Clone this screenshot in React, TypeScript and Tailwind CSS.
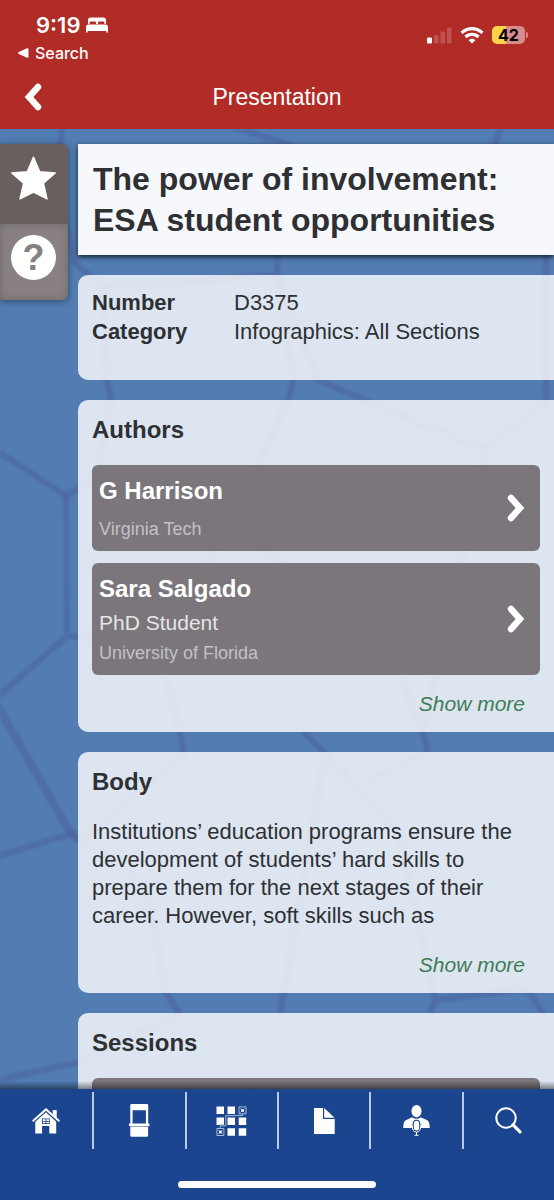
import React from "react";

function BedIcon() {
  return (
    <svg viewBox="0 0 22 16" className="h-4 w-[22px]" fill="currentColor" aria-hidden="true">
      <path d="M2 7V3.200C2 1.400 3 .5 4.700 .5h12.600C19 .5 20 1.400 20 3.200V7h-1.600V5.800c0-.9-.5-1.400-1.400-1.400h-3.600c-.9 0-1.400.5-1.400 1.400V7h-2V5.800c0-.9-.5-1.400-1.400-1.400H5c-.9 0-1.400.5-1.400 1.400V7z" />
      <path d="M0 15.500V10c0-1.500.9-2.400 2.400-2.400h17.200c1.500 0 2.400.9 2.400 2.400v5.500h-1.700v-1.600H1.700v1.600z" />
    </svg>
  );
}

function SignalIcon() {
  return (
    <svg viewBox="0 0 25 17" className="h-[17px] w-[25px]" fill="#fff" aria-hidden="true">
      <rect x="0" y="10.500" width="5" height="6" rx="1.300" />
      <g opacity=".18">
        <rect x="7" y="8" width="4.500" height="8.500" rx="1.200" />
        <rect x="13.500" y="4.500" width="4.500" height="12" rx="1.200" />
        <rect x="20" y="0.500" width="4.500" height="16" rx="1.200" />
      </g>
    </svg>
  );
}

function WifiIcon() {
  return (
    <svg viewBox="0 0 24 18" className="h-[18px] w-6" fill="none" stroke="#fff" strokeWidth="3.300" aria-hidden="true">
      <path d="M1.600 6.900a14.800 14.800 0 0 1 20.800 0" />
      <path d="M5.500 11a9.300 9.300 0 0 1 13 0" />
      <path d="M12 17.500l-3.300-3.300a4.700 4.700 0 0 1 6.600 0z" fill="#fff" stroke="none" />
    </svg>
  );
}

function Chevron({ left = false }: { left?: boolean }) {
  return (
    <svg viewBox="0 0 18 28" className="h-7 w-[18px]" fill="none" stroke="#fff" strokeWidth="6.400" strokeLinecap="round" strokeLinejoin="miter" aria-hidden="true">
      <path d={left ? "M14 4 5 14 14 24" : "M4 4l9 10L4 24"} />
    </svg>
  );
}

function HexBackdrop() {
  return (
    <svg viewBox="0 129 554 960" preserveAspectRatio="xMidYMid slice" className="pointer-events-none absolute inset-0 h-full w-full blur-[1px]" fill="none" stroke="#4c609e" strokeOpacity=".5" strokeWidth="6" strokeLinejoin="round" aria-hidden="true">
      <path d="M63 120 58 165 -10 205M58 190l17 73 28 24 4 93 4 20-14 76-31 20L-10 446" />
      <path d="M225 124l65 21-13 50v80l-174 12M277 275l16 105-5 20-60 130M277 275l41 105 47 20 120 50 61-50V275M502 124l-9 26 53 105v20" />
      <path d="M66 495l1 141 90 4 71-110 150 90 45 112 5 21-60 30M67 636-8 702M157 640l23 92 4 21-100 87M303 732l22 21 75 80M423 732l62-282" />
      <path d="M-8 858l78-24 76 50 20 109 14 21-100 48-90 20M284 993l-4 21M325 753l-41 240M400 833l35 167-5 14M435 1000l85-10 10 3 13 21" />
      <path d="M-6 700 70 832l14 8" strokeWidth="8" />
    </svg>
  );
}

function HomeIcon() {
  return (
    <svg viewBox="0 0 28 26" className="h-[26px] w-7" aria-hidden="true">
      <path d="M14 0 0 12.600l1.300 1.400L14 2.700 26.700 14l1.300-1.400-3.300-3V2h-4v4z" fill="#fff" />
      <path d="M14 4.200 3.300 13.700V25.500h6.800V18h7.200v7.500h6.900V13.700z" fill="#fff" />
      <path d="M10 10.500h8v5.500h-8z" fill="#1b458e" />
      <path d="M10.800 11.300h2.800v1.600h-2.800zM14.500 11.300h2.800v1.600h-2.800zM10.800 13.700h2.800v1.600h-2.800zM14.500 13.700h2.800v1.600h-2.800z" fill="#fff" />
    </svg>
  );
}

function BoothIcon() {
  return (
    <svg viewBox="0 0 21 33" className="h-[33px] w-[21px]" fill="#fff" aria-hidden="true">
      <path fillRule="evenodd" d="M2.500 0h15.500q1.200 0 1.200 1.200V19.500H20.500V22H0v-2.500h1.300V1.200Q1.300 0 2.500 0zM3.600 6.200v13.300h13.300V6.200z" />
      <path d="M1.300 22.600h17.800v8.900q0 1.200-1.200 1.200H2.500q-1.200 0-1.200-1.200z" />
    </svg>
  );
}

function GridIcon() {
  return (
    <svg viewBox="0 0 31 30" className="h-[30px] w-[31px]" aria-hidden="true">
      <path fill="#fff" d="M.5.500H8v7.500H.5zM11.500.500H19v7.500h-7.500zM.5 11.500H8V19H.5zM11.500 11.500H19V19h-7.500zM22.700 11.500h7.500V19h-7.500zM11.500 22.200H19v7.500h-7.500zM22.700 22.200h7.500v7.500h-7.500z" />
      <path fill="none" stroke="#1b458e" strokeWidth="2.200" d="M4.200 22v-2.200h5.600V9.600h16.700V8" />
      <g fill="none" stroke="#c8d5ee" strokeWidth=".8">
        <path d="M4.200 22v-2.200h5.600V9.600h16.700V8M23 .900h7v7h-7zM.9 22.500h7v7h-7z" />
        <path d="m24.500 2.500 4 4m0-4-4 4M2.400 24l4 4m0-4-4 4" />
      </g>
      <path fill="#fff" d="M25.200 3.200h2.600v2.600h-2.600zM3.100 24.700h2.600v2.600H3.100z" />
    </svg>
  );
}

function DocumentIcon() {
  return (
    <svg viewBox="0 0 21 26" className="h-[26px] w-[21px]" fill="#fff" aria-hidden="true">
      <path d="M0 0h9v11h11.700v15H0z" />
      <path d="M10.200 0v9.800h10.300z" />
    </svg>
  );
}

function SpeakerIcon() {
  return (
    <svg viewBox="0 0 27 31" className="h-[31px] w-[27px]" aria-hidden="true">
      <ellipse cx="13.500" cy="6.200" rx="5" ry="6.200" fill="#fff" />
      <path d="M.3 23c0-5 .8-7.200 3.500-8.200l5.500-2.500c2.600 2 5.800 2 8.400 0l5.500 2.500c2.700 1 3.500 3.200 3.500 8.200z" fill="#fff" />
      <path d="M8.800 19c0 4 1.300 7.600 3.700 8.200V31h2v-3.800c2.400-.6 3.700-4.200 3.700-8.200z" fill="#1b458e" />
      <rect x="9.700" y="14.700" width="7.600" height="12.500" rx="3.800" fill="#1b458e" />
      <rect x="10.800" y="15.700" width="5.400" height="9.800" rx="2.700" fill="#fff" />
      <path d="M9.300 19.500v2.300c0 3 1.700 5.300 4.200 5.300s4.200-2.300 4.200-5.300v-2.300M13.500 27v3M11.500 30.300h4" fill="none" stroke="#fff" strokeWidth="1" />
    </svg>
  );
}

function SearchIcon() {
  return (
    <svg viewBox="0 0 27 27" className="h-[27px] w-[27px]" fill="none" stroke="#fff" aria-hidden="true">
      <circle cx="11" cy="11" r="9.700" strokeWidth="2" />
      <path d="m18 17.800 7 7" strokeWidth="3.200" strokeLinecap="round" />
    </svg>
  );
}

function AuthorRow({ name, role, org }: { name: string; role?: string; org: string }) {
  return (
    <button type="button" className="flex w-full items-center justify-between rounded-md bg-[#7a767b] py-2 pr-[15px] pl-[7px] text-left">
      <span className={role ? "flex flex-col" : "flex flex-col gap-[6px]"}>
        <span className="text-2xl leading-9 font-bold text-white">{name}</span>
        {role && <span className="text-[21px] leading-8 text-[#e6e5e7]">{role}</span>}
        <span className="text-lg leading-7 text-[#c3c1c4]">{org}</span>
      </span>
      <Chevron />
    </button>
  );
}

function ShowMore() {
  return (
    <button type="button" className="mr-[15px] self-end text-[21px] leading-7 text-[#417c57] italic">
      Show more
    </button>
  );
}

const navItems = [
  { label: "Home", icon: <HomeIcon /> },
  { label: "Exhibitors", icon: <BoothIcon /> },
  { label: "Floor plan", icon: <GridIcon /> },
  { label: "Documents", icon: <DocumentIcon /> },
  { label: "Speakers", icon: <SpeakerIcon /> },
  { label: "Search", icon: <SearchIcon /> },
];

export default function App() {
  return (
    <div className="flex h-screen flex-col overflow-hidden bg-[#527cb2] font-['Liberation_Sans',Arial,sans-serif] text-[#2e3033]">
      <header className="shrink-0 bg-[#b12c27] text-white">
        <div className="flex items-start justify-between pt-3 pr-[26px] pl-4 font-[Inter,sans-serif]">
          <div>
            <div className="flex items-center gap-[6px] pl-5">
              <span className="text-[22px] leading-[26px] font-semibold">9:19</span>
              <BedIcon />
            </div>
            <a href="#search" className="flex items-center gap-[6px] pt-[3px] pl-[2px] text-base leading-6 font-medium">
              <svg viewBox="0 0 11 10" className="h-[10px] w-[11px]" fill="currentColor" aria-hidden="true">
                <path d="M.8 4.100 9 .3q1.500-.5 1.500 1v7.400q0 1.500-1.500 1L.8 5.900q-1.200-.9 0-1.800z" />
              </svg>
              Search
            </a>
          </div>
          <div className="flex items-center gap-2 pt-[14px]">
            <SignalIcon />
            <WifiIcon />
            <div className="flex items-center gap-px">
              <div className="flex h-[18px] w-[33px] items-center justify-center rounded-[5px] bg-linear-to-r from-[#fcd449] from-42% to-[#d98b8e] to-42% text-base leading-[18px] font-bold text-black">
                42
              </div>
              <span className="h-[6px] w-[2px] rounded-r-full bg-[#d98b8e]" />
            </div>
          </div>
        </div>
        <div className="grid h-16 grid-cols-[68px_1fr_68px] items-center">
          <button type="button" aria-label="Back" className="flex h-11 items-center pl-6">
            <Chevron left />
          </button>
          <h1 className="text-center text-[23px] leading-7">Presentation</h1>
        </div>
      </header>

      <main className="relative min-h-0 flex-1 overflow-hidden">
        <HexBackdrop />
        <div className="relative flex h-full items-start gap-[10px] overflow-y-auto pt-[15px] [scrollbar-width:none]">
          <aside className="flex w-[68px] shrink-0 flex-col overflow-hidden rounded-r-md shadow-[0_1px_6px_rgba(0,0,0,0.45)]">
            <button type="button" aria-label="Add to favourites" className="flex h-20 justify-center bg-[#695f5f] pt-3 pr-px">
              <svg viewBox="0 0 45 44" className="h-11 w-[45px]" fill="#fff" stroke="#fff" strokeWidth="1.500" strokeLinejoin="round" aria-hidden="true">
                <path d="m22.500 1.200 6.200 14.500 15.500 1.300-11.800 10.300 3.600 15.500-13.500-6.800L9 42.800l3.600-15.500L.8 17l15.500-1.300z" />
              </svg>
            </button>
            <button type="button" aria-label="Help" className="flex h-[76px] justify-center bg-[#888081] pt-[11px] pr-px shadow-[inset_0_0_8px_rgba(0,0,0,0.2)]">
              <span className="flex size-[45px] items-center justify-center rounded-full bg-white text-4xl leading-[45px] font-bold text-[#888081]">
                ?
              </span>
            </button>
          </aside>

          <div className="flex min-w-0 flex-1 flex-col gap-5">
            <section className="bg-white/95 px-[15px] pt-[15px] pb-[14px] shadow-[0_2px_5px_rgba(0,0,0,0.75)]">
              <h2 className="text-[32px] leading-[41px] font-bold">
                The power of involvement: ESA student opportunities
              </h2>
            </section>

            <section className="min-h-[105px] rounded-l-[10px] bg-white/80 px-[14px] pt-[13px]">
              <dl className="grid grid-cols-[142px_1fr] text-[22px] leading-[29px]">
                <dt className="font-bold">Number</dt>
                <dd>D3375</dd>
                <dt className="font-bold">Category</dt>
                <dd>Infographics: All Sections</dd>
              </dl>
            </section>

            <section className="flex flex-col rounded-l-[10px] bg-white/80 p-[14px]">
              <h3 className="text-2xl leading-8 font-bold">Authors</h3>
              <div className="flex flex-col gap-3 pt-[19px] pb-[15px]">
                <AuthorRow name="G Harrison" org="Virginia Tech" />
                <AuthorRow name="Sara Salgado" role="PhD Student" org="University of Florida" />
              </div>
              <ShowMore />
            </section>

            <section className="flex flex-col rounded-l-[10px] bg-white/80 p-[14px]">
              <h3 className="text-2xl leading-8 font-bold">Body</h3>
              <p className="pt-5 pb-[21px] text-[22px] leading-7">
                Institutions’ education programs ensure the development of students’ hard skills to prepare them for the next stages of their career. However, soft skills such as
              </p>
              <ShowMore />
            </section>

            <section className="rounded-l-[10px] bg-white/80 p-[14px]">
              <h3 className="text-2xl leading-8 font-bold">Sessions</h3>
              <div className="mt-[19px] h-24 rounded-md bg-[#7a767b]" />
            </section>
          </div>
        </div>
        <div className="pointer-events-none absolute inset-x-0 bottom-0 h-2 bg-linear-to-t from-black/45 to-transparent" />
      </main>

      <nav className="shrink-0 bg-[#1b458e] pt-[3px]">
        <ul className="grid grid-cols-6">
          {navItems.map((item) => (
            <li key={item.label} className="h-[57px] border-[#b9cbea] not-first:border-l-2">
              <a href="#" aria-label={item.label} className="flex h-full items-center justify-center">
                {item.icon}
              </a>
            </li>
          ))}
        </ul>
        <div className="flex justify-center pt-8 pb-3">
          <span className="h-[7px] w-[198px] rounded-full bg-white" />
        </div>
      </nav>
    </div>
  );
}
